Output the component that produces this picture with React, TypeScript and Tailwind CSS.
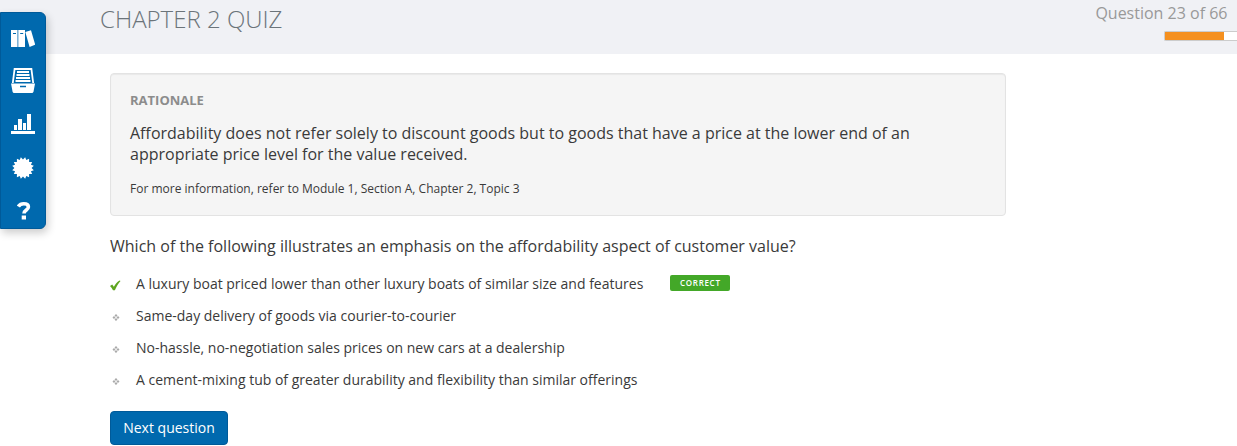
import React from "react";

function BooksIcon() {
  return (
    <svg width="24" height="18" viewBox="0 0 24 18" fill="#fff">
      <path d="M0 0h6.500v17H0zM7.300 0H14v17H7.300zM14.300 2.100L20 .2 24.200 14.700 18.600 16.900z" />
      <path d="M2 3.500h3M9.200 3.500h3" stroke="#0069ae" strokeWidth="1" />
    </svg>
  );
}

function DrawerIcon() {
  return (
    <svg width="24" height="26" viewBox="0 0 24 26" fill="none">
      <path d="M1.800 15L3.600 1h16.800l1.800 14" stroke="#fff" strokeWidth="1.800" />
      <path d="M6 4h12M5.500 7h13M5 10h14M4.500 13h15" stroke="#fff" strokeWidth="2" />
      <path d="M0 15.500h24l-1.500 8q-.3 1.500-1.700 1.500H3.200q-1.400 0-1.700-1.500z" fill="#fff" />
      <path d="M9 18.500h6" stroke="#0069ae" strokeWidth="1.500" />
    </svg>
  );
}

function ChartIcon() {
  return (
    <svg width="24" height="20" viewBox="0 0 24 20" fill="#fff">
      <path d="M0 17h24v3H0zM3 11h3v5H3zM7 5h4v11H7zM12 9h3v7h-3zM16 0h4v16h-4z" />
    </svg>
  );
}

function BadgeIcon() {
  const points = Array.from({ length: 32 }, (_, i) => {
    const r = i % 2 === 0 ? 11 : 8.6;
    const a = (i * Math.PI) / 16 + Math.PI / 16;
    return `${(11 + r * Math.cos(a)).toFixed(2)},${(11 + r * Math.sin(a)).toFixed(2)}`;
  }).join(" ");
  return (
    <svg width="22" height="22" viewBox="0 0 22 22">
      <polygon points={points} fill="#fff" />
    </svg>
  );
}

function HelpIcon() {
  return (
    <svg width="14" height="18" viewBox="0 0 14 18" fill="none">
      <path d="M1.400 4.500Q3 1.800 6.800 1.800q4.600 0 4.600 3.200c0 3-4.400 3-4.400 6.500" stroke="#fff" strokeWidth="3.600" />
      <path d="M4.700 13.500H9v4H4.700z" fill="#fff" />
    </svg>
  );
}

function Sidebar() {
  return (
    <nav className="absolute left-0 top-3 h-[217px] w-[46px] rounded-r-[6px] border border-[#005a99] bg-[#0069ae] shadow-[2px_4px_8px_rgba(0,0,0,0.2)]">
      <div className="flex flex-col items-center pr-[1px] pt-[17px]">
        <BooksIcon />
        <div className="mt-5 flex"><DrawerIcon /></div>
        <div className="mt-5 flex"><ChartIcon /></div>
        <div className="mt-[22.500px] flex"><BadgeIcon /></div>
        <div className="mt-[23.500px] flex pl-[2px]"><HelpIcon /></div>
      </div>
    </nav>
  );
}

function Marker({ correct }: { correct?: boolean }) {
  return correct ? (
    <svg width="11" height="11" viewBox="0 0 11 11" className="mt-[2px]">
      <path d="M0 6L2.200 4.500 3.900 6.700C5.200 4.200 7 1.900 9.500.4l1 .5C8.300 3.300 6.300 6.700 4.900 10.200H3C2.300 8.600 1.200 7.200 0 6z" fill="#5ea51f" />
    </svg>
  ) : (
    <svg width="11" height="11" viewBox="0 0 11 11" className="mt-[2px]">
      <path d="M6 2l1.500 1.500L6 5 4.500 3.500zM4 4l1.500 1.500L4 7 2.500 5.500zM8 4l1.500 1.500L8 7 6.500 5.500zM6 6l1.500 1.500L6 9 4.500 7.500z" fill="#aaa" />
    </svg>
  );
}

const answers = [
  { text: "A luxury boat priced lower than other luxury boats of similar size and features", correct: true },
  { text: "Same-day delivery of goods via courier-to-courier" },
  { text: "No-hassle, no-negotiation sales prices on new cars at a dealership" },
  { text: "A cement-mixing tub of greater durability and flexibility than similar offerings" },
];

export default function App() {
  return (
    <div className="relative h-[446px] w-[1237px] overflow-hidden whitespace-nowrap bg-white font-['Open_Sans',sans-serif] text-[#3a3a3a]">
      <header className="flex h-[54px] justify-between bg-[#f0f1f5] pl-[100px]">
        <h1 className="pt-[2px] text-[24px] font-light leading-[33px] text-[#6b747a]">CHAPTER 2 QUIZ</h1>
        <div className="flex flex-col items-end">
          <p className="pr-[9.500px] pt-[2px] text-[16px] leading-[22px] text-[#999]">Question 23 of 66</p>
          <div className="mt-[7px] h-[10px] w-[73px] rounded-l-[2px] border border-r-0 border-[#ccc] bg-white">
            <div className="h-full w-[59px] bg-[#f5901f]" />
          </div>
        </div>
      </header>
      <Sidebar />
      <main className="flex flex-col items-start pl-[110px] pt-[19px]">
        <section className="h-[143px] w-[896px] rounded-[4px] border border-[#e3e3e3] bg-[#f5f5f5] pl-[19px] pt-4 shadow-[inset_0_1px_1px_rgba(0,0,0,0.05)]">
          <h2 className="text-[13px] font-bold leading-5 text-[#8c8c8c]">RATIONALE</h2>
          <p className="mt-[13px] text-[16px] leading-[21px]">
            Affordability does not refer solely to discount goods but to goods that have a price at the lower end of an
            <br />
            appropriate price level for the value received.
          </p>
          <p className="mt-[14px] text-[12px] leading-5">For more information, refer to Module 1, Section A, Chapter 2, Topic 3</p>
        </section>
        <p className="mt-5 text-[16px] leading-[21px]">Which of the following illustrates an emphasis on the affordability aspect of customer value?</p>
        <ul className="mt-[11px]">
          {answers.map((a) => (
            <li key={a.text} className="flex h-8 items-center">
              <Marker correct={a.correct} />
              <span className="ml-[15px] text-[14px] leading-5">{a.text}</span>
              {a.correct && (
                <span className="-mt-[3px] ml-[27px] h-4 w-[60px] rounded-[2px] bg-[#43a828] text-center text-[8px] font-semibold leading-4 tracking-[0.700px] text-white">CORRECT</span>
              )}
            </li>
          ))}
        </ul>
        <button className="mt-[15px] h-[34px] w-[118px] rounded-[4px] border border-[#005a99] bg-[#0069ae] text-[14px] font-medium leading-8 text-white">Next question</button>
      </main>
    </div>
  );
}
